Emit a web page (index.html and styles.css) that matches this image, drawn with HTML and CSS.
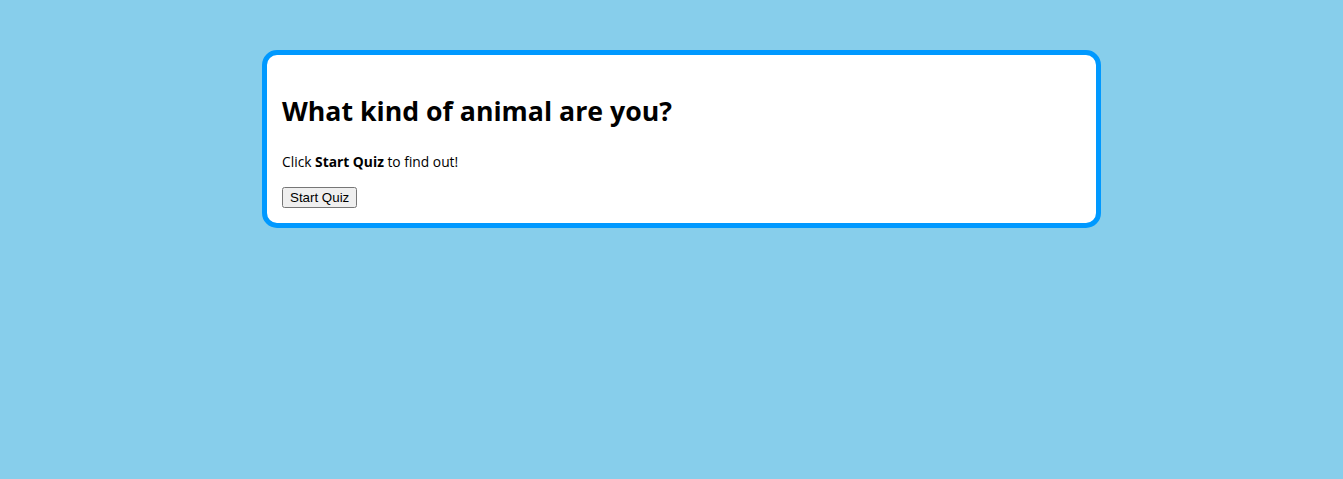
FILE: index.html
```html
<!DOCTYPE html>
<html>
<head>
<meta charset="utf-8">
<link rel="stylesheet" href="styles.css">
</head>
<body>
<div class="card">
  <h1 class="title">What kind of animal are you?</h1>
  <p class="lead">Click <b>Start Quiz</b> to find out!</p>
  <button class="start">Start Quiz</button>
</div>
</body>
</html>
```
FILE: styles.css
```css
html, body {
  margin: 0;
  padding: 0;
  background: #87ceeb;
  height: 100%;
}
body {
  font-family: "Open Sans", sans-serif;
  padding-top: 50px;
  box-sizing: border-box;
}
.card {
  width: 839px;
  box-sizing: border-box;
  margin-left: 262px;
  background: #fff;
  border: 5px solid #0099ff;
  border-radius: 15px;
  padding: 24px 15px 15px 15px;
}
.title {
  margin: 14px 0 0 0;
  font-size: 26.7px;
  font-weight: 700;
  line-height: 36px;
  color: #000;
}
.lead {
  margin: 23px 0 16px 0;
  font-size: 13.8px;
  line-height: 19px;
  color: #000;
}
.start {
  font-family: "Liberation Sans", Arial, sans-serif;
  font-size: 13.33px;
  margin: 0;
  display: block;
  height: 21px;
  padding: 1px 6px;
}
```
